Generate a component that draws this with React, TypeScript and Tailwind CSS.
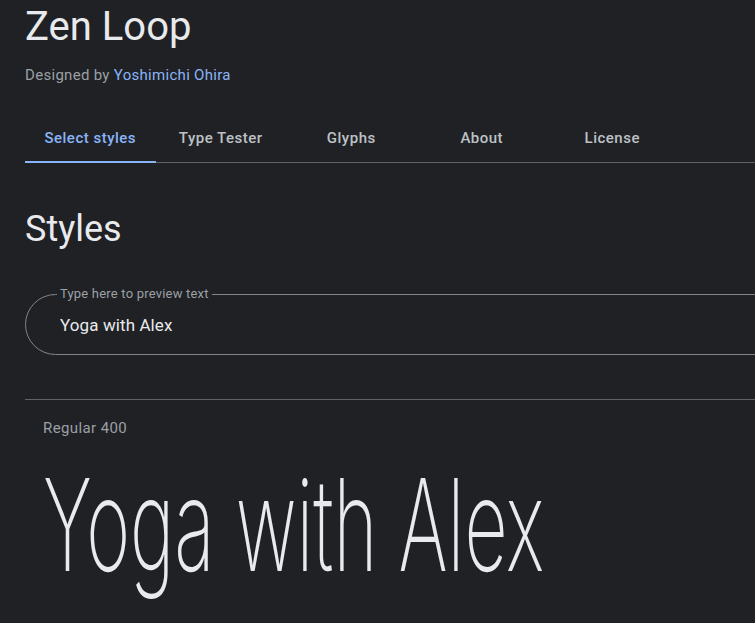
import React, { useState } from "react"

const tabs = ["Select styles", "Type Tester", "Glyphs", "About", "License"]

export default function App() {
  const [active, setActive] = useState(0)
  const [preview, setPreview] = useState("Yoga with Alex")

  return (
    <div className="h-[623px] w-[755px] overflow-hidden bg-[#202124] pl-[25px] font-['Roboto',sans-serif] text-[#e3e3e3]">
      <h1 className="pt-[3px] text-[40px] leading-[48px] font-normal text-[#e8eaed]">Zen Loop</h1>
      <p className="mt-[14px] text-[15px] leading-[20px] tracking-[0.3px] text-[#9aa0a6]">
        Designed by <a className="text-[#8ab4f8]">Yoshimichi Ohira</a>
      </p>

      <div className="mt-[27px] flex w-[760px] border-b border-[#5f6368]">
        {tabs.map((t, i) => (
          <button
            key={t}
            onClick={() => setActive(i)}
            className="flex h-[50px] w-[130.5px] shrink-0 flex-col"
          >
            <span
              className={
                "flex flex-1 items-center justify-center pt-[3px] text-[15px] font-medium tracking-[0.5px] " +
                (i === active ? "text-[#8ab4f8]" : "text-[#bdc1c6]")
              }
            >
              {t}
            </span>
            <span className={"-mb-px h-[2px] w-full " + (i === active ? "bg-[#8ab4f8]" : "bg-transparent")} />
          </button>
        ))}
      </div>

      <h2 className="mt-[44px] text-[36px] leading-[44px] font-normal text-[#e8eaed]">Styles</h2>

      <div className="relative mt-[43px] h-[61px] w-[780px] rounded-l-[31px] border border-[#80868b]">
        <label className="absolute -top-[10px] left-[31px] bg-[#202124] px-[3px] text-[13px] leading-[18px] tracking-[0.2px] text-[#9aa0a6]">
          Type here to preview text
        </label>
        <input
          value={preview}
          onChange={(e) => setPreview(e.target.value)}
          className="h-full w-full bg-transparent pl-[34px] pt-[1px] text-[17px] tracking-[0.1px] text-[#e8eaed] outline-none"
        />
      </div>

      <div className="mt-[44px] w-[760px] border-t border-[#5f6368]" />

      <p className="mt-[18px] pl-[18px] text-[15px] leading-[20px] tracking-[0.4px] text-[#9aa0a6]">Regular 400</p>

      <div className="mt-[12px] pl-[18px]">
        <span className="inline-block origin-left scale-x-[0.585] whitespace-nowrap font-['Inter',sans-serif] text-[128px] leading-[150px] font-extralight text-[#e8eaed]">
          {preview}
        </span>
      </div>
    </div>
  )
}
